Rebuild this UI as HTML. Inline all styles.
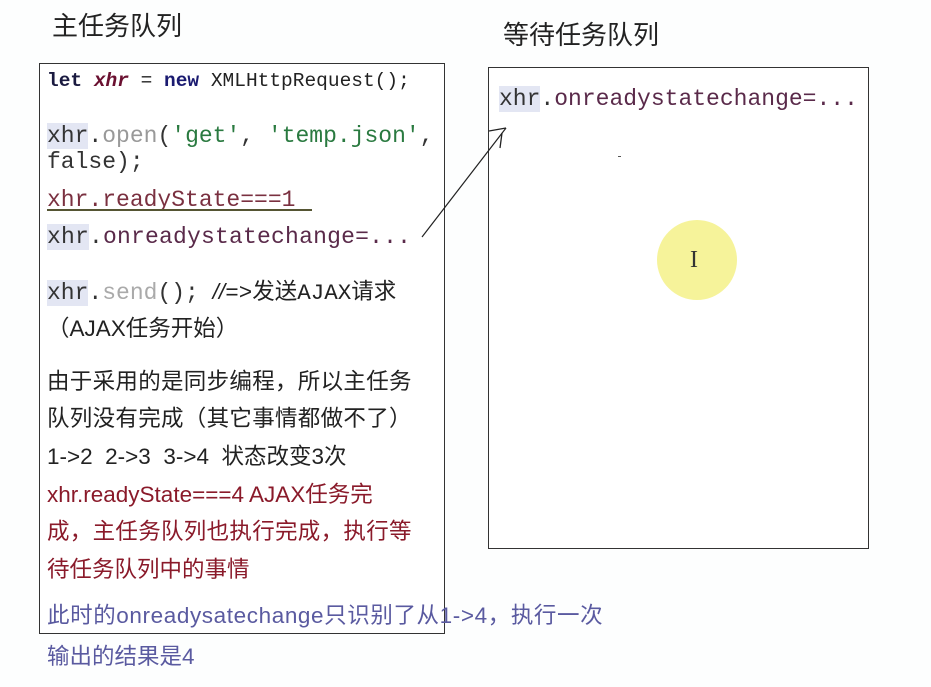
<!DOCTYPE html>
<html><head><meta charset="utf-8"><style>
body{margin:0;width:931px;height:687px;background:#fdfefe;position:relative;overflow:hidden;font-family:"Liberation Sans","Noto Sans CJK SC",sans-serif;}
.a{position:absolute;white-space:nowrap;line-height:1;}
.t{font-size:26px;color:#222;}
.box{position:absolute;border:1.5px solid #333;background:#fff;}
.m{font-family:"Liberation Mono",monospace;font-size:23px;color:#333;}
.c{font-size:22.5px;color:#222;}
.hl{background:#e3e6f3;}
</style></head><body>
<div class="a t" style="left:52px;top:13px">主任务队列</div>
<div class="a t" style="left:503px;top:22px">等待任务队列</div>

<div class="box" style="left:39px;top:63px;width:404px;height:569px"></div>
<div class="box" style="left:488px;top:67px;width:379px;height:480px"></div>

<div class="a m" style="left:47px;top:72px;font-size:19.5px;font-weight:bold;color:#222"><span style="color:#1a1a40">let</span> <i style="color:#6a1030">xhr</i> <span style="font-weight:normal">=</span> <span style="color:#1a1a70">new</span> <span style="font-weight:normal">XMLHttpRequest();</span></div>
<div class="a m" style="left:47px;top:125px"><span class="hl">xhr</span>.<span style="color:#999">open</span>(<span style="color:#2a7a40">'get'</span>, <span style="color:#2a7a40">'temp.json'</span>,</div>
<div class="a m" style="left:47px;top:151px">false);</div>
<div class="a m" style="left:47px;top:189px;color:#7a3040">xhr.readyState===1</div>
<div class="a" style="left:47px;top:209px;width:265px;height:2px;background:#553"></div>
<div class="a m" style="left:47px;top:226px;letter-spacing:0.2px"><span class="hl">xhr</span>.<span style="color:#5a2a4a">onreadystatechange=...</span></div>
<div class="a m" style="left:47px;top:281px"><span class="hl">xhr</span>.<span style="color:#aaa">send</span>(); <span class="c" style="font-family:'Liberation Sans','Noto Sans CJK SC',sans-serif;font-style:italic">//</span><span class="c">=&gt;发送AJAX请求</span></div>
<div class="a c" style="left:47px;top:318px">（AJAX任务开始）</div>
<div class="a c" style="left:47px;top:371px;letter-spacing:0.3px">由于采用的是同步编程，所以主任务</div>
<div class="a c" style="left:47px;top:408px;letter-spacing:0.3px">队列没有完成（其它事情都做不了）</div>
<div class="a c" style="left:47px;top:446px">1-&gt;2&nbsp; 2-&gt;3&nbsp; 3-&gt;4&nbsp; 状态改变3次</div>
<div class="a c" style="left:47px;top:484px;color:#8a1a2a">xhr.readyState===4 AJAX任务完</div>
<div class="a c" style="left:47px;top:521px;color:#8a1a2a;letter-spacing:0.3px">成，主任务队列也执行完成，执行等</div>
<div class="a c" style="left:47px;top:559px;color:#8a1a2a">待任务队列中的事情</div>
<div class="a c" style="left:47px;top:605px;color:#5a5aa0;letter-spacing:0.6px">此时的onreadysatechange只识别了从1-&gt;4，执行一次</div>
<div class="a c" style="left:47px;top:646px;color:#5a5aa0">输出的结果是4</div>

<div class="a m" style="left:499px;top:88px"><span class="hl">xhr</span>.<span style="color:#5a2a4a">onreadystatechange=...</span></div>

<div class="a" style="left:657px;top:220px;width:80px;height:80px;border-radius:50%;background:#f6f39a"></div>
<div class="a" style="left:690px;top:248px;font-family:'Liberation Serif',serif;font-size:24px;color:#333">I</div>
<div class="a" style="left:618px;top:156px;width:3px;height:1px;background:#555"></div>

<svg class="a" style="left:0;top:0" width="931" height="687">
<path d="M422 237 L506 128" stroke="#222" stroke-width="1.2" fill="none"/>
<path d="M489 131 L506 128 M502 133 L500 148" stroke="#222" stroke-width="1.3" fill="none"/>
</svg>
</body></html>
